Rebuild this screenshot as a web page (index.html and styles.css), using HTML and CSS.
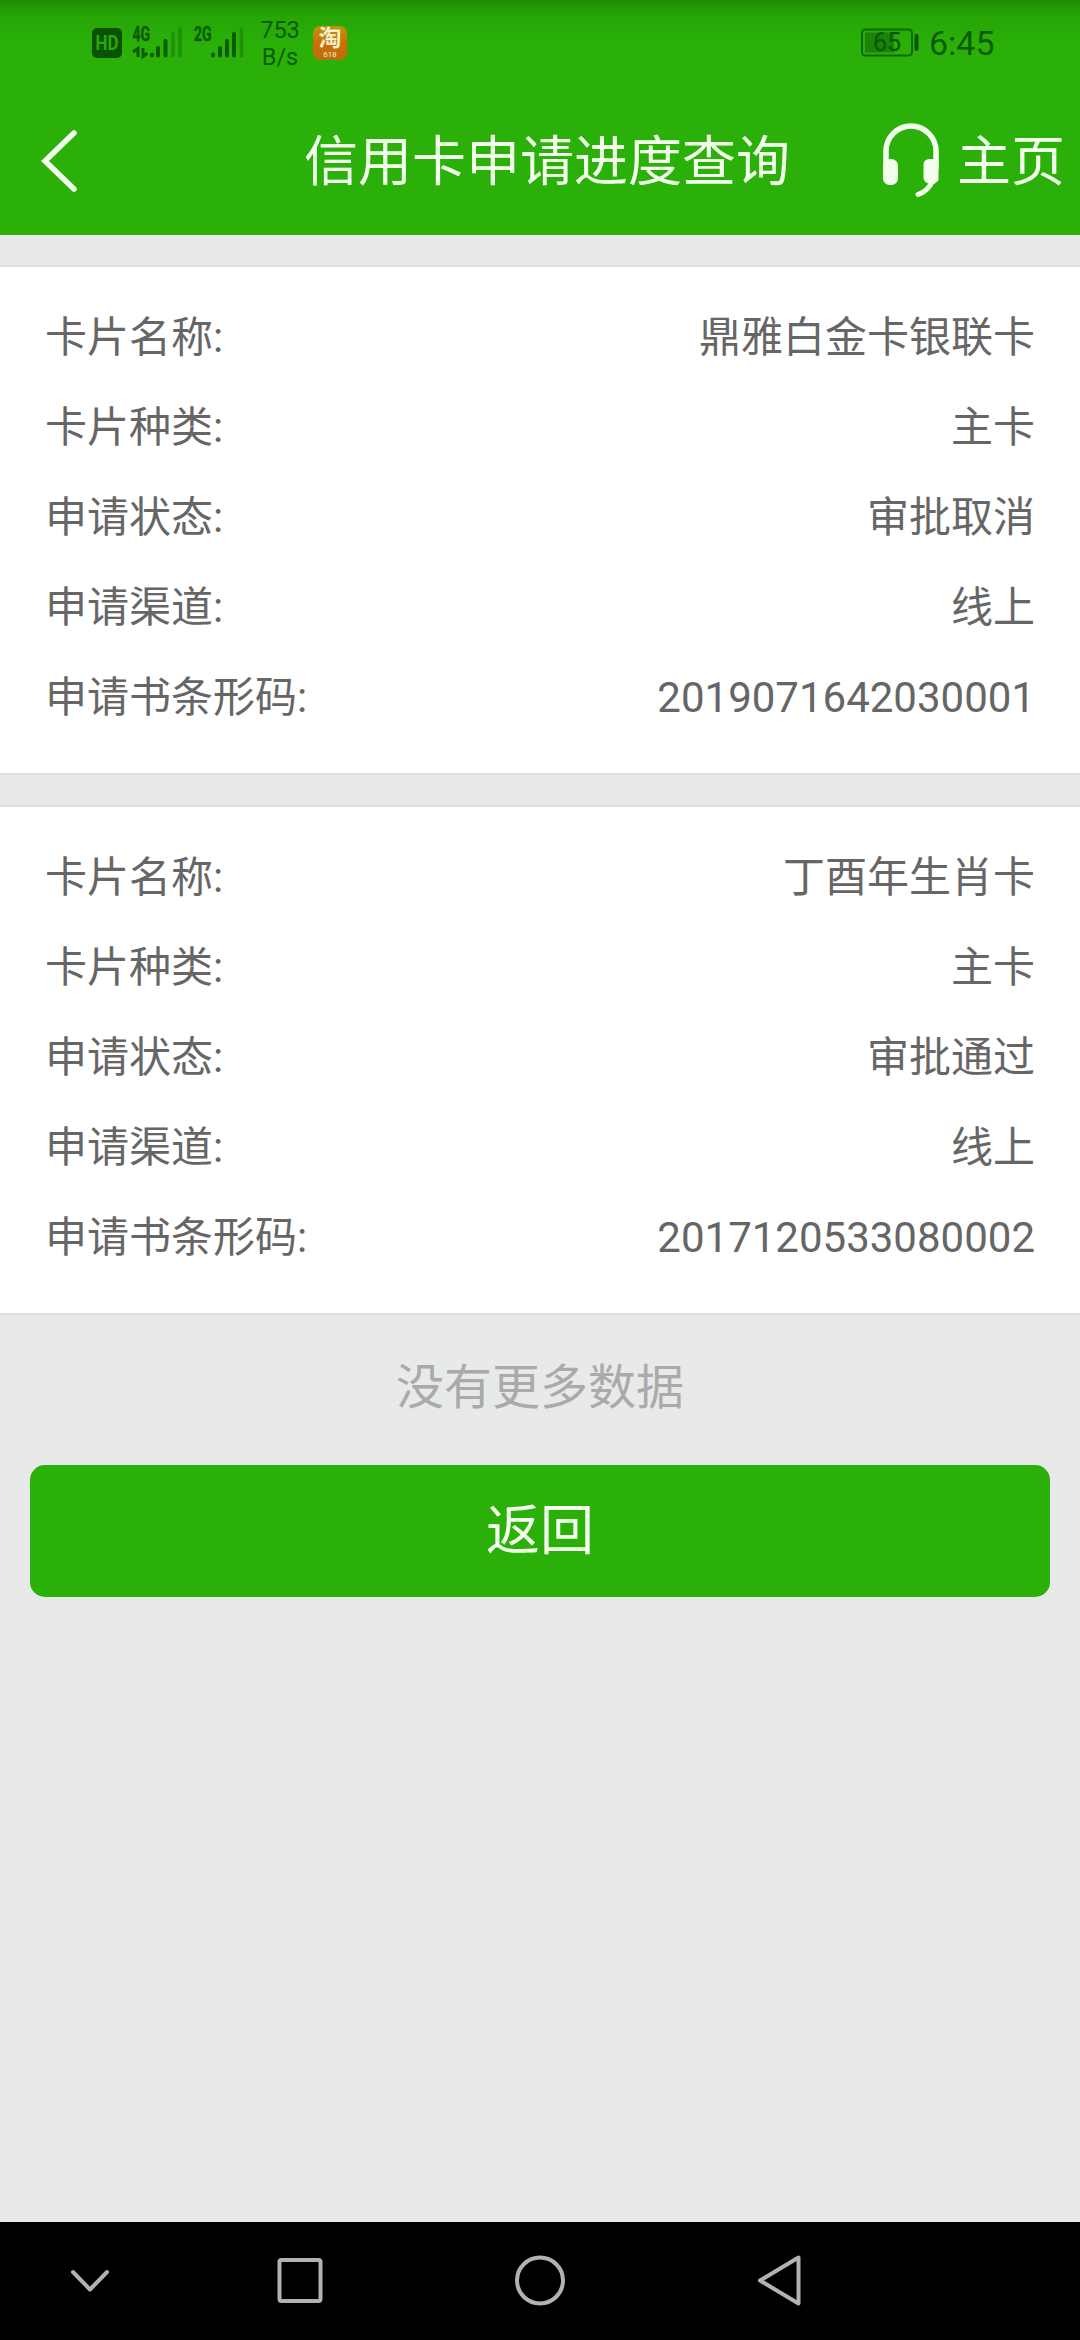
FILE: index.html
```html
<!DOCTYPE html>
<html lang="zh-CN">
<head>
<meta charset="UTF-8">
<meta name="viewport" content="width=device-width, initial-scale=1.0">
<title>信用卡申请进度查询</title>
<link rel="stylesheet" href="styles.css">
</head>
<body>
<div class="top">
    <div class="status-bar">
        <svg class="signals" width="156" height="40" viewBox="0 0 156 40">
            <rect x="0" y="8" width="30" height="30" rx="5" fill="#0b5204"/>
            <text x="3.5" y="29.500" textLength="23" lengthAdjust="spacingAndGlyphs" class="hd">HD</text>
            <text x="40.5" y="21" textLength="17.500" lengthAdjust="spacingAndGlyphs" class="net">4G</text>
            <text x="102" y="21" textLength="17.500" lengthAdjust="spacingAndGlyphs" class="net">2G</text>
            <!-- data arrows -->
            <path d="M41 32l5-3.500V37M51 28v8.500l4.500-3.500" fill="none" stroke="#0b5c04" stroke-width="3"/>
            <g stroke="#0b5c04" stroke-width="4" stroke-linecap="round">
                <path d="M60 34.500v1M66 28v7.500M73.500 21v14.500"/>
                <path d="M121 34.500v1M128 28v7.500M135 21v14.500M142 14v21.500"/>
            </g>
            <path d="M81 14v21.500M88 9v27M149.500 9v27" stroke="#1f8f07" stroke-width="3.500" stroke-linecap="round"/>
        </svg>
        <div class="speed">753<br>B/s</div>
        <div class="taobao"><span class="tao">淘</span><span class="sale">618</span></div>
        <svg class="battery" width="60" height="30" viewBox="0 0 60 30">
            <rect x="1" y="1.500" width="50" height="26" rx="3.500" fill="none" stroke="#0d6b05" stroke-width="2"/>
            <rect x="4" y="4.500" width="29" height="20" fill="#1c8209"/>
            <path d="M55.500 8v13" stroke="#0a5603" stroke-width="4" stroke-linecap="round"/>
            <text x="26" y="23" text-anchor="middle" class="level">65</text>
        </svg>
        <div class="clock">6:45</div>
    </div>
    <div class="header">
        <svg class="back" width="44" height="70" viewBox="0 0 44 70">
            <path d="M36 7L7 35l29 28" fill="none" stroke="#f2ffec" stroke-width="5.500" stroke-linecap="round" stroke-linejoin="miter"/>
        </svg>
        <div class="title">信用卡申请进度查询</div>
        <svg class="headset" width="56" height="76" viewBox="0 0 56 76">
            <path d="M3 46V28a25 25 0 0 1 50 0v18" fill="none" stroke="#f2ffec" stroke-width="5.500"/>
            <rect x="0" y="36" width="15" height="26" rx="6.500" fill="#f2ffec"/>
            <path d="M47 36h8.500v21c-1 2-2.500 2-4 4h-4.500c-4-1-6.500-3-6.500-7V42c0-4 2.500-6 6.500-6z" fill="#f2ffec"/>
            <path d="M49.500 58c-3 7-7 11-14.500 13.500" fill="none" stroke="#f2ffec" stroke-width="5" stroke-linecap="round"/>
        </svg>
        <div class="home">主页</div>
    </div>
</div>

<div class="content">
    <div class="card">
        <div class="row"><span>卡片名称:</span><span>鼎雅白金卡银联卡</span></div>
        <div class="row"><span>卡片种类:</span><span>主卡</span></div>
        <div class="row"><span>申请状态:</span><span>审批取消</span></div>
        <div class="row"><span>申请渠道:</span><span>线上</span></div>
        <div class="row"><span>申请书条形码:</span><span>2019071642030001</span></div>
    </div>
    <div class="card">
        <div class="row"><span>卡片名称:</span><span>丁酉年生肖卡</span></div>
        <div class="row"><span>卡片种类:</span><span>主卡</span></div>
        <div class="row"><span>申请状态:</span><span>审批通过</span></div>
        <div class="row"><span>申请渠道:</span><span>线上</span></div>
        <div class="row"><span>申请书条形码:</span><span>2017120533080002</span></div>
    </div>
    <div class="no-more">没有更多数据</div>
    <button class="return-button">返回</button>
</div>

<div class="nav-bar">
    <svg width="60" height="60" viewBox="0 0 60 60"><path d="M13 21l17 17.500L47 21"/></svg>
    <svg width="60" height="60" viewBox="0 0 60 60"><rect x="9.500" y="9" width="41" height="41" rx="2"/></svg>
    <svg width="60" height="60" viewBox="0 0 60 60"><circle cx="30" cy="29.500" r="23"/></svg>
    <svg width="60" height="60" viewBox="0 0 60 60"><path d="M10 29.500L48.500 6.500v46z"/></svg>
</div>
</body>
</html>
```
FILE: styles.css
```css
* {
    box-sizing: border-box;
}

body {
    margin: 0;
    height: 2340px;
    display: flex;
    flex-direction: column;
    background: #e8eae9;
    font-family: Roboto, "Noto Sans CJK SC", sans-serif;
}

.top {
    height: 235px;
    background: linear-gradient(#1f8c06, #26a507 16px, #2ab008 45px);
}

.status-bar {
    display: flex;
    align-items: flex-start;
    height: 85px;
    padding: 20px 87px 0 92px;
    color: #0b5c04;
}

.hd {
    font-size: 21px;
    font-weight: bold;
    fill: #2ba80c;
}

.net {
    font-size: 20px;
    font-weight: bold;
    fill: #0b5c04;
    stroke: #0b5c04;
    stroke-width: 0.4;
}

.speed {
    width: 60px;
    margin-top: -3px;
    margin-left: 2px;
    font-size: 23.5px;
    line-height: 27px;
    text-align: center;
}

.taobao {
    display: flex;
    flex-direction: column;
    align-items: center;
    width: 34px;
    height: 34px;
    margin-top: 6px;
    margin-left: 3px;
    border-radius: 7px;
    background: linear-gradient(#bd9607, #cf6d0c 50%, #b9700a);
    color: #f0f0cf;
}

.tao {
    font-size: 23px;
    font-weight: bold;
    line-height: 25px;
}

.sale {
    font-size: 8px;
    line-height: 8px;
}

.battery {
    margin-top: 8px;
    margin-left: auto;
}

.level {
    font-size: 25px;
    fill: #0a5603;
}

.clock {
    width: 64px;
    margin-left: 8px;
    font-size: 34px;
    line-height: 46px;
    white-space: nowrap;
}

.header {
    display: flex;
    align-items: center;
    height: 152px;
    padding: 0 15px 0 38px;
    color: #f2ffec;
    font-size: 54px;
}

.title {
    margin-left: 222px;
    padding-top: 4px;
    line-height: 80px;
}

.headset {
    margin-left: auto;
}

.home {
    margin-left: 18px;
    padding-top: 4px;
    line-height: 80px;
}

.content {
    flex: 1;
    padding-top: 30px;
}

.card {
    height: 510px;
    margin-bottom: 30px;
    padding: 26px 45px 0;
    border-top: 2px solid #dddfde;
    border-bottom: 2px solid #dddfde;
    background: #fff;
}

.row {
    display: flex;
    justify-content: space-between;
    height: 90px;
    color: #666;
    font-size: 42px;
    line-height: 90px;
}

.no-more {
    height: 120px;
    color: #aaa;
    font-size: 48px;
    line-height: 86px;
    text-align: center;
}

.return-button {
    display: block;
    width: 1020px;
    height: 132px;
    margin: 0 auto;
    padding: 0 0 10px;
    border: none;
    border-radius: 15px;
    background: #2ab008;
    color: #f2ffec;
    font-family: inherit;
    font-size: 54px;
}

.nav-bar {
    display: grid;
    grid-template-columns: 180px 240px 240px 240px;
    align-items: center;
    justify-items: center;
    height: 118px;
    background: #000;
}

.nav-bar svg {
    fill: none;
    stroke: #b2b2b2;
    stroke-width: 4;
    stroke-linecap: round;
    stroke-linejoin: round;
}
```
